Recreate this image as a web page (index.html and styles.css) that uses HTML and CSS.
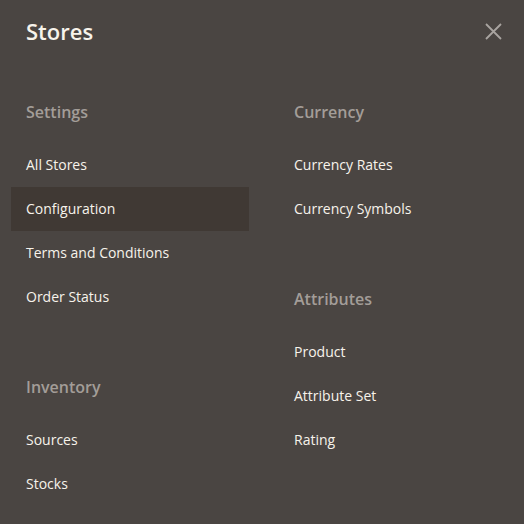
FILE: index.html
```html
<!DOCTYPE html>
<html>
<head>
<meta charset="utf-8">
<link rel="stylesheet" href="styles.css">
</head>
<body>
<div class="menu">
  <div class="header">
    <h1 class="title">Stores</h1>
    <button class="close" aria-label="Close">
      <svg width="17" height="17" viewBox="0 0 17 17"><path d="M1 1L16 16M16 1L1 16" stroke="#a9a4a0" stroke-width="1.8" fill="none"/></svg>
    </button>
  </div>
  <div class="columns">
    <div class="column">
      <div class="group">
        <div class="group-title">Settings</div>
        <ul class="items">
          <li class="item">All Stores</li>
          <li class="item active">Configuration</li>
          <li class="item">Terms and Conditions</li>
          <li class="item">Order Status</li>
        </ul>
      </div>
      <div class="group">
        <div class="group-title">Inventory</div>
        <ul class="items">
          <li class="item">Sources</li>
          <li class="item">Stocks</li>
        </ul>
      </div>
    </div>
    <div class="column">
      <div class="group">
        <div class="group-title">Currency</div>
        <ul class="items">
          <li class="item">Currency Rates</li>
          <li class="item">Currency Symbols</li>
        </ul>
      </div>
      <div class="group">
        <div class="group-title">Attributes</div>
        <ul class="items">
          <li class="item">Product</li>
          <li class="item">Attribute Set</li>
          <li class="item">Rating</li>
        </ul>
      </div>
    </div>
  </div>
</div>
</body>
</html>
```
FILE: styles.css
```css
html, body {
  margin: 0;
  padding: 0;
  background: #4a4542;
  height: 100%;
}
body {
  font-family: "Open Sans", "Liberation Sans", sans-serif;
  color: #f7f3eb;
}
.menu {
  padding-top: 16px;
}
.header {
  display: flex;
  justify-content: space-between;
  align-items: center;
  padding: 0 22px 0 26px;
}
.title {
  margin: 0;
  font-size: 22px;
  line-height: 30px;
  font-weight: 600;
  color: #f7f3eb;
}
.close {
  background: none;
  border: 0;
  padding: 0;
  width: 17px;
  height: 17px;
  display: flex;
}
.columns {
  display: flex;
  gap: 30px;
  padding-left: 11px;
  margin-top: 55px;
}
.column {
  width: 238px;
  display: flex;
  flex-direction: column;
  gap: 57px;
}
.group-title {
  font-size: 16px;
  line-height: 20px;
  font-weight: 600;
  color: #a39d98;
  padding: 1px 0 0 15px;
  margin-bottom: 21px;
}
.items {
  list-style: none;
  margin: 0;
  padding: 0;
}
.item {
  font-size: 14px;
  line-height: 44px;
  height: 44px;
  padding-left: 15px;
  color: #f7f3eb;
}
.item.active {
  background: #403934;
}
```
